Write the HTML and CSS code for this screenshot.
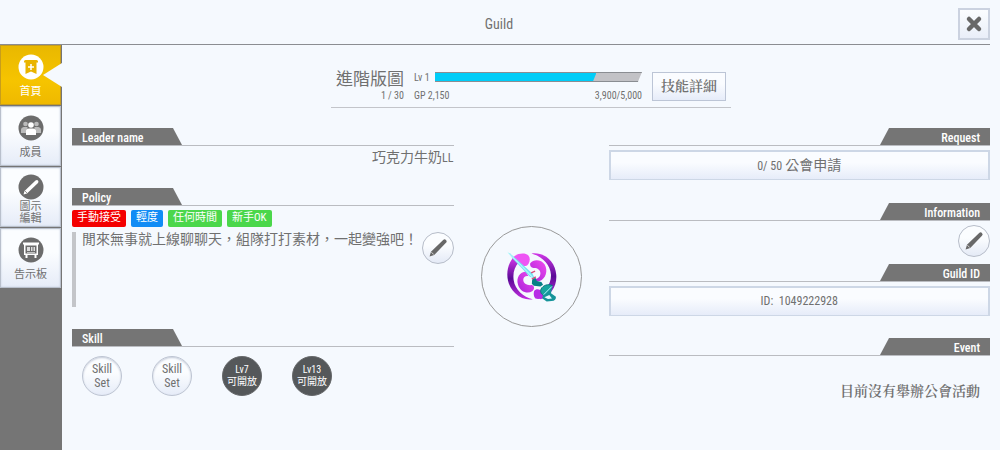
FILE: index.html
```html
<!DOCTYPE html>
<html lang="zh-Hant">
<head>
    <meta charset="UTF-8">
    <meta name="viewport" content="width=device-width, initial-scale=1.0">
    <title>Guild</title>
    <link rel="stylesheet" href="styles.css">
</head>
<body>

    <!-- Shared icons -->
    <svg class="sprites" aria-hidden="true">
        <symbol id="pencil" viewBox="0 0 32 32">
            <path d="M7 25 L8.500 20 L21.500 7.500 Q23 6 24.500 7.500 Q26 9 24.500 10.500 L12 23.500 Z"/>
            <path d="M9 20.500 L11.500 23" stroke="#fff" stroke-width="0.800"/>
        </symbol>
    </svg>

    <header class="topbar">
        <h1>Guild</h1>
        <button class="close" type="button" aria-label="Close">
            <svg viewBox="0 0 28 28"><path d="M9 9 L19 19 M19 9 L9 19"/></svg>
        </button>
    </header>

    <div class="layout">
        <!-- Side menu -->
        <nav class="sidebar">
            <a class="tab active" href="#home">
                <svg viewBox="0 0 26 26">
                    <circle cx="13" cy="13" r="12.500" fill="#fff"/>
                    <path d="M6 7.500 Q6 6 7.500 6 H18.500 Q20 6 20 7.500 V8.500 H18.500 V20 L13 17.500 L7.500 20 V8.500 H6 Z" fill="#e9b400"/>
                    <path d="M13 10 V16 M10 13 H16" stroke="#fff" stroke-width="1.500"/>
                </svg>
                <span>首頁</span>
            </a>
            <a class="tab" href="#members">
                <svg viewBox="0 0 26 26">
                    <circle cx="13" cy="13" r="12.500" fill="#6c6c6c"/>
                    <g fill="#bbb">
                        <circle cx="7.500" cy="9" r="2.300"/><circle cx="18.500" cy="9" r="2.300"/>
                        <path d="M3 18 V14.500 Q3 12.500 5.500 12 H9.500 V18 Z M23 18 V14.500 Q23 12.500 20.500 12 H16.500 V18 Z"/>
                    </g>
                    <circle cx="13" cy="10" r="2.800" fill="#fff"/>
                    <path d="M8 20 V16 Q8 14 11 13.500 H15 Q18 14 18 16 V20 Z" fill="#fff"/>
                </svg>
                <span>成員</span>
            </a>
            <a class="tab tab-tall" href="#emblem">
                <svg viewBox="0 0 26 26">
                    <circle cx="13" cy="13" r="12.500" fill="#6c6c6c"/>
                    <path d="M5.500 20.500 L6.500 17 L17.500 6.500 Q19 5.500 20 6.500 Q21 7.500 20 9 L9 19.500 Z" fill="#fff"/>
                    <path d="M7 17 L9 19" stroke="#6c6c6c" stroke-width="0.700"/>
                </svg>
                <span>圖示<br>編輯</span>
            </a>
            <a class="tab" href="#board">
                <svg viewBox="0 0 26 26">
                    <circle cx="13" cy="13" r="12.500" fill="#6c6c6c"/>
                    <path d="M5 5.500 H21 V7.500 H20 V18 H18.500 V21 H16.500 V18 H9.500 V21 H7.500 V18 H6 V7.500 H5 Z" fill="#fff"/>
                    <rect x="7.500" y="8.500" width="11" height="8" fill="#6c6c6c"/>
                    <path d="M9 10 H12 V14 H9 Z M13 10 H14.500 V14 H13 Z M15.500 10 H17 V14 H15.500 Z M9 15 H17 V15.800 H9 Z" fill="#ddd"/>
                </svg>
                <span>告示板</span>
            </a>
        </nav>

        <main>
            <!-- Guild name and level -->
            <div class="summary">
                <div class="guild">
                    <h2>進階版圖</h2>
                    <span>1 / 30</span>
                </div>
                <div class="level">
                    <div class="level-row">
                        <span>Lv 1</span>
                        <div class="bar" role="progressbar" aria-label="GP" aria-valuenow="3900" aria-valuemin="0" aria-valuemax="5000">
                            <div class="fill" style="width: 78%"></div>
                        </div>
                    </div>
                    <div class="points">
                        <span>GP 2,150</span>
                        <span>3,900/5,000</span>
                    </div>
                </div>
                <button class="box detail" type="button">技能詳細</button>
            </div>

            <div class="columns">
                <div class="left">
                    <section class="leader">
                        <h3><span>Leader name</span></h3>
                        <p class="leader-name">巧克力牛奶<span class="latin">LL</span></p>
                    </section>

                    <section class="policy">
                        <h3><span>Policy</span></h3>
                        <div class="tags">
                            <span class="tag red">手動接受</span>
                            <span class="tag blue">輕度</span>
                            <span class="tag green">任何時間</span>
                            <span class="tag green">新手OK</span>
                        </div>
                        <div class="message">
                            <p>閒來無事就上線聊聊天，組隊打打素材，一起變強吧！</p>
                            <button class="edit" type="button" aria-label="Edit policy"><svg><use href="#pencil"/></svg></button>
                        </div>
                    </section>

                    <section>
                        <h3><span>Skill</span></h3>
                        <div class="skills">
                            <button class="skill" type="button">Skill<br>Set</button>
                            <button class="skill" type="button">Skill<br>Set</button>
                            <button class="skill locked" type="button">Lv7<br>可開放</button>
                            <button class="skill locked" type="button">Lv13<br>可開放</button>
                        </div>
                    </section>
                </div>

                <!-- Guild emblem -->
                <div class="emblem">
                    <svg viewBox="18 19 300 300" role="img" aria-label="Guild emblem">
                        <defs>
                            <linearGradient id="ring" x1="0" y1="0" x2="0" y2="1">
                                <stop offset="0" stop-color="#d238e8"/>
                                <stop offset="0.500" stop-color="#5a0a96"/>
                                <stop offset="1" stop-color="#c22ee0"/>
                            </linearGradient>
                            <linearGradient id="swirl" x1="1" y1="0" x2="0" y2="1">
                                <stop offset="0" stop-color="#f34cf0"/>
                                <stop offset="1" stop-color="#a822d8"/>
                            </linearGradient>
                        </defs>
                        <path d="M112 112 C88 142 88 190 118 219 C134 235 154 241 172 238 C143 231 118 208 114 180 C111 158 116 141 130 126 Z" fill="url(#ring)"/>
                        <path d="M168 99 C207 94 240 123 243 164 C246 199 226 227 196 238 L180 228 C208 218 228 194 227 164 C225 133 202 109 168 99 Z" fill="url(#ring)"/>
                        <path d="M110 114 C119 102 137 97 151 101 C163 105 166 118 159 130 C154 138 145 139 137 136 Z" fill="#ee55f4"/>
                        <path d="M164 129 C174 116 198 117 208 133 C219 152 211 176 193 183 C184 186 174 183 171 177 C185 179 195 171 195 159 C195 148 185 142 174 143 C167 142 162 137 164 129 Z" fill="url(#swirl)"/>
                        <path d="M151 154 C133 155 121 173 127 193 C132 213 154 224 170 214 C178 208 178 198 169 195 C156 197 143 191 143 179 C143 170 151 166 159 168 Z" fill="url(#swirl)"/>
                        <path d="M176 213 C182 204 195 207 201 217 L208 232 Q193 239 180 236 Q172 226 176 213 Z" fill="#b82be6"/>
                        <path d="M96 96 L103 99 L171 160 L178 176 L163 170 L112 116 Z" fill="#76e5f2"/>
                        <path d="M96 96 L139 138 L171 171" stroke="#d6ffff" stroke-width="3" fill="none"/>
                        <path d="M167 158 L179 153 M169 177 L181 170" stroke="#dc4978" stroke-width="4"/>
                        <path d="M170 179 L180 173 L184 183 L198 186 L203 194 L195 199 L175 197 L169 191 Z" fill="#087f86"/>
                        <path d="M197 207 C203 195 218 191 231 196 L224 207 L207 227 C199 225 193 217 197 207 Z" fill="#18a49f" stroke="#07777d" stroke-width="3"/>
                        <path d="M204 224 L232 196 L227 220 L242 230 Q243 242 229 243 L214 245 L200 235 Z" fill="#16949a"/>
                        <path d="M205 224 L230 199" stroke="#b6ffff" stroke-width="3"/>
                        <path d="M207 232 L222 225 L230 236 L218 237 Z" fill="#e6faff"/>
                    </svg>
                </div>

                <div class="right">
                    <section class="request">
                        <h3><span>Request</span></h3>
                        <button class="box wide" type="button"><span class="latin">0/ 50</span> 公會申請</button>
                    </section>

                    <section class="information">
                        <h3><span>Information</span></h3>
                        <button class="edit" type="button" aria-label="Edit information"><svg><use href="#pencil"/></svg></button>
                    </section>

                    <section class="guild-id">
                        <h3><span>Guild ID</span></h3>
                        <button class="box wide" type="button"><span class="latin">ID:&nbsp; 1049222928</span></button>
                    </section>

                    <section>
                        <h3><span>Event</span></h3>
                        <p class="event">目前沒有舉辦公會活動</p>
                    </section>
                </div>
            </div>
        </main>
    </div>

</body>
</html>
```
FILE: styles.css
```css
* {
    box-sizing: border-box;
}
body {
    margin: 0;
    min-height: 100vh;
    display: flex;
    flex-direction: column;
    background: #f5f9fe;
    color: #707070;
    font-family: "Liberation Sans Narrow", "Roboto Condensed", "Noto Sans CJK TC", sans-serif;
    font-size: 14px;
}
h1, h2, h3, p {
    margin: 0;
    font-weight: normal;
}
button {
    padding: 0;
    color: inherit;
    font-family: inherit;
    cursor: pointer;
}
.sprites {
    display: none;
}
.latin {
    font-size: 12px;
}

/* Top bar */
.topbar {
    display: grid;
    grid-template-columns: 1fr auto 1fr;
    align-items: center;
    height: 45px;
    margin-right: 10px;
    padding-top: 3px;
    border-bottom: 1px solid #8b8d92;
}
.topbar h1 {
    grid-column: 2;
    padding-left: 8px;
    font-size: 14px;
}
.close {
    justify-self: end;
    width: 32px;
    height: 32px;
    border: 2px solid #cbd2e0;
    background: linear-gradient(#fbfdff, #e9eef9);
}
.close svg {
    display: block;
    width: 28px;
    height: 28px;
    stroke: #686868;
    stroke-width: 4.5;
    stroke-linecap: round;
}

/* Side menu */
.layout {
    display: flex;
    flex: 1;
}
.sidebar {
    display: flex;
    flex-direction: column;
    gap: 1px;
    width: 62px;
    padding-right: 1px;
    background: #757575;
}
.tab {
    display: flex;
    flex-direction: column;
    align-items: center;
    height: 60px;
    padding-top: 8px;
    border: 1px solid #b9c0cc;
    box-shadow: inset 0 0 2px #c3ccdc;
    background: linear-gradient(#fbfdff 40%, #e6ecf8);
    color: #707070;
    font-size: 11px;
    line-height: 12px;
    text-align: center;
    text-decoration: none;
}
.tab svg {
    width: 26px;
    height: 26px;
    margin-bottom: 6px;
}
.tab-tall {
    padding-top: 6px;
}
.tab-tall svg {
    margin-bottom: 1px;
}
.active {
    position: relative;
    border-color: #c79d1c;
    box-shadow: none;
    background: linear-gradient(#e9b800, #f6c400 60%, #efb900);
    color: #fff;
}
.active::after {
    content: "";
    position: absolute;
    top: 17px;
    right: -2px;
    width: 19px;
    height: 24px;
    background: #f5f9fe;
    clip-path: polygon(100% 0, 100% 100%, 0 50%);
}

/* Guild name and level */
main {
    flex: 1;
    padding: 25px 10px 0;
}
.summary {
    display: grid;
    grid-template-columns: auto 1fr auto;
    column-gap: 10px;
    width: 400px;
    max-width: 100%;
    height: 38px;
    margin: 0 auto 20px;
    padding: 0 5px;
    border-bottom: 1px solid #c3c5ca;
}
.guild {
    text-align: right;
    font-size: 10px;
    line-height: 16px;
}
.guild h2 {
    font-size: 17px;
    line-height: 18px;
}
.guild span, .points {
    white-space: nowrap;
}
.level {
    font-size: 10px;
    line-height: 16px;
}
.level-row {
    display: flex;
    gap: 5px;
    height: 18px;
    white-space: nowrap;
}
.bar {
    flex: 1;
    height: 10px;
    margin-top: 2px;
    border-top: 1px solid #8a8d92;
    border-bottom: 1px solid #8a8d92;
    background: #c2c2c6;
    clip-path: polygon(0 0, 100% 0, 98% 100%, 0 100%);
}
.fill {
    height: 8px;
    background: #00cdf8;
    clip-path: polygon(0 0, 100% 0, 98% 100%, 0 100%);
}
.points {
    display: flex;
    justify-content: space-between;
}
.box {
    border: 2px solid #cdd7e6;
    border-bottom-width: 1px;
    background: linear-gradient(#fafcff 40%, #e6ecf9);
}
.detail {
    height: 29px;
    margin-top: 2px;
    padding: 0 8px 3px;
    border: 1px solid #bcc5d6;
    font-family: "Noto Serif CJK TC", "Noto Sans CJK TC", serif;
    font-size: 14px;
    font-weight: 600;
    line-height: 20px;
}

/* Columns */
.columns {
    display: grid;
    grid-template-columns: 1fr 155px 1fr;
}
h3 {
    border-bottom: 1px solid #babcc1;
    font-size: 12px;
    font-weight: 500;
    line-height: 18px;
}
h3 span {
    display: block;
    width: 110px;
    height: 17px;
    padding: 1px 10px 0;
    background: #757575;
    color: #fff;
    clip-path: polygon(0 0, 101px 0, 100% 100%, 0 100%);
}
.right h3 span {
    margin-left: auto;
    text-align: right;
    clip-path: polygon(9px 0, 100% 0, 100% 100%, 0 100%);
}
.leader {
    height: 60px;
}
.leader-name {
    font-size: 14px;
    line-height: 22px;
    text-align: right;
}
.policy {
    height: 141px;
}
.tags {
    display: flex;
    gap: 5px;
    padding: 4px 0 5px;
}
.tag {
    height: 17px;
    padding: 0 5px;
    border-radius: 2px;
    color: #fff;
    font-size: 11px;
    line-height: 16px;
}
.red {
    background: #f40000;
}
.blue {
    background: #118cf5;
}
.green {
    background: #4bd74b;
}
.message {
    display: flex;
    justify-content: space-between;
    align-items: flex-start;
    height: 75px;
    border-left: 4px solid #c3c5c9;
    padding-left: 6px;
}
.message p {
    font-size: 14px;
    line-height: 14px;
    white-space: nowrap;
}
.edit {
    width: 32px;
    height: 32px;
    border: 1px solid #b7bdc9;
    border-radius: 50%;
    background: linear-gradient(#fbfdff 40%, #e4eaf6);
}
.edit svg {
    display: block;
    width: 30px;
    height: 30px;
    fill: #686868;
}
.skills {
    display: flex;
    gap: 30px;
    padding: 9px 10px 0;
}
.skill {
    width: 40px;
    height: 40px;
    border: 1px solid #bdc4d2;
    border-radius: 50%;
    box-shadow: inset 0 1px 2px #c3cad8;
    background: linear-gradient(#fbfdff 40%, #e6ecf8);
    font-size: 12px;
    line-height: 14px;
    white-space: nowrap;
}
.locked {
    border-color: #66686a;
    box-shadow: none;
    background: #55585a;
    color: #fff;
    font-size: 10px;
    line-height: 12px;
}
.emblem {
    justify-self: center;
    width: 101px;
    height: 101px;
    margin-top: 98px;
    border: 1px solid #999;
    border-radius: 50%;
}
.emblem svg {
    display: block;
}

/* Right column */
.request {
    height: 75px;
}
.information {
    height: 61px;
    text-align: right;
}
.information .edit {
    margin-top: 4px;
}
.guild-id {
    height: 74px;
}
.wide {
    width: 100%;
    height: 30px;
    margin-top: 4px;
    padding-bottom: 3px;
    font-size: 14px;
}
.event {
    padding: 24px 10px 0 0;
    font-family: "Noto Serif CJK TC", "Noto Sans CJK TC", serif;
    font-size: 14px;
    font-weight: 600;
    line-height: 20px;
    text-align: right;
}
```
